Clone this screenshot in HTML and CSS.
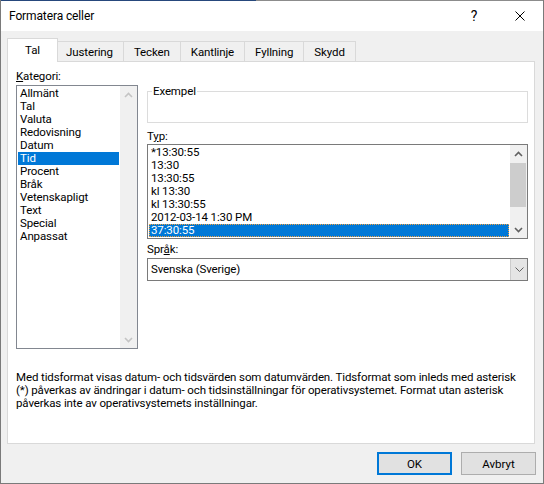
FILE: index.html
```html
<!DOCTYPE html>
<html lang="sv">
  <head>
    <meta charset="UTF-8" />
    <title>Formatera celler</title>
    <link rel="stylesheet" href="styles.css">
  </head>
  <body>
    <div class="window">
      <div class="titlebar">
        <span class="title">Formatera celler</span>
        <span class="title-btn help">?</span>
        <span class="title-btn close">
          <svg width="10" height="10" viewBox="0 0 10 10"><path d="M0.5 0.5 L9.5 9.5 M9.5 0.5 L0.5 9.5" stroke="#000" stroke-width="1" fill="none"/></svg>
        </span>
      </div>

      <div class="content">
        <div class="tabs">
          <div class="tab active">Tal</div>
          <div class="tab">Justering</div>
          <div class="tab">Tecken</div>
          <div class="tab">Kantlinje</div>
          <div class="tab">Fyllning</div>
          <div class="tab">Skydd</div>
        </div>

        <div class="panel">
          <div class="panel-main">
            <div class="col-cat">
              <label class="lbl"><u>K</u>ategori:</label>
              <div class="listbox cat-list">
                <ul class="items">
                  <li>Allmänt</li>
                  <li>Tal</li>
                  <li>Valuta</li>
                  <li>Redovisning</li>
                  <li>Datum</li>
                  <li class="sel">Tid</li>
                  <li>Procent</li>
                  <li>Bråk</li>
                  <li>Vetenskapligt</li>
                  <li>Text</li>
                  <li>Special</li>
                  <li>Anpassat</li>
                </ul>
                <div class="vscroll disabled">
                  <div class="sb-btn">
                    <svg width="9" height="6" viewBox="0 0 9 6"><path d="M1 5 L4.5 1.5 L8 5" fill="none" stroke="#c4c4c4" stroke-width="1.6"/></svg>
                  </div>
                  <div class="sb-track"></div>
                  <div class="sb-btn">
                    <svg width="9" height="6" viewBox="0 0 9 6"><path d="M1 1 L4.5 4.5 L8 1" fill="none" stroke="#c4c4c4" stroke-width="1.6"/></svg>
                  </div>
                </div>
              </div>
            </div>

            <div class="col-right">
              <fieldset class="sample">
                <legend>Exempel</legend>
              </fieldset>

              <label class="lbl lbl-typ">T<u>y</u>p:</label>
              <div class="listbox type-list">
                <ul class="items">
                  <li>*13:30:55</li>
                  <li>13:30</li>
                  <li>13:30:55</li>
                  <li>kl 13:30</li>
                  <li>kl 13:30:55</li>
                  <li>2012-03-14 1:30 PM</li>
                  <li class="sel focus">37:30:55</li>
                </ul>
                <div class="vscroll">
                  <div class="sb-btn">
                    <svg width="9" height="6" viewBox="0 0 9 6"><path d="M1 5 L4.5 1.5 L8 5" fill="none" stroke="#606060" stroke-width="1.6"/></svg>
                  </div>
                  <div class="sb-track">
                    <div class="sb-thumb"></div>
                  </div>
                  <div class="sb-btn">
                    <svg width="9" height="6" viewBox="0 0 9 6"><path d="M1 1 L4.5 4.5 L8 1" fill="none" stroke="#606060" stroke-width="1.6"/></svg>
                  </div>
                </div>
              </div>

              <label class="lbl lbl-lang">Spr<u>å</u>k:</label>
              <div class="combo">
                <span class="combo-text">Svenska (Sverige)</span>
                <span class="combo-btn">
                  <svg width="9" height="5" viewBox="0 0 9 5"><path d="M0.5 0.5 L4.5 4.5 L8.5 0.5" fill="none" stroke="#606060" stroke-width="1"/></svg>
                </span>
              </div>
            </div>
          </div>

          <p class="desc">
            Med tidsformat visas datum- och tidsvärden som datumvärden. Tidsformat som inleds med asterisk<br>
            (*) påverkas av ändringar i datum- och tidsinställningar för operativsystemet. Format utan asterisk<br>
            påverkas inte av operativsystemets inställningar.
          </p>
        </div>

        <div class="buttons">
          <button class="btn default">OK</button>
          <button class="btn">Avbryt</button>
        </div>
      </div>
    </div>
  </body>
</html>
```

FILE: styles.css
```css
* {
  margin: 0;
  padding: 0;
  box-sizing: border-box;
}

body {
  width: 544px;
  height: 484px;
  font-family: Roboto, "Liberation Sans", sans-serif;
  font-size: 11.5px;
  letter-spacing: -0.12px;
  color: #000000;
  background-color: #ffffff;
}

.window {
  width: 544px;
  height: 484px;
  display: flex;
  flex-direction: column;
  border: 1px solid #7a7a7a;
  border-top: 0;
  padding-top: 1px;
  background: linear-gradient(to right, #26487c 256px, #8c8c8c 256px) border-box 0 0 / 100% 1px no-repeat, #f0f0f0;
}

/* title bar */

.titlebar {
  height: 30px;
  display: flex;
  align-items: center;
  background-color: #ffffff;
}

.title {
  flex: 1;
  padding-left: 8px;
  font-size: 12px;
}

.title-btn {
  width: 46px;
  height: 30px;
  display: flex;
  align-items: center;
  justify-content: center;
}

.help {
  font-size: 14px;
}

/* tabs */

.content {
  flex: 1;
  padding: 7px 8px 0 6px;
}

.tabs {
  height: 23px;
  display: flex;
  align-items: flex-end;
  padding-left: 2px;
}

.tab {
  height: 20px;
  min-width: 51px;
  padding: 0 10px;
  margin-left: -1px;
  display: flex;
  align-items: center;
  justify-content: center;
  border: 1px solid #d9d9d9;
  border-bottom: 0;
  background-color: #f0f0f0;
}

.tab:first-child {
  margin-left: 0;
}

.tab.active {
  height: 24px;
  margin: 0 -2px -1px -2px;
  padding-bottom: 2px;
  background-color: #ffffff;
  position: relative;
  z-index: 1;
}

/* panel */

.panel {
  height: 383px;
  padding: 8px 5px 0 8px;
  border: 1px solid #d9d9d9;
  background-color: #ffffff;
}

.panel-main {
  display: grid;
  grid-template-columns: 122px 381px;
  column-gap: 9px;
}

.lbl {
  display: block;
  height: 13px;
  line-height: 13px;
}

.listbox {
  display: flex;
  border: 1px solid #828790;
  background-color: #ffffff;
}

.cat-list {
  height: 264px;
  margin-top: 2px;
}

.type-list {
  height: 95px;
  margin-top: 1px;
  border-color: #7a7a7a;
}

.items {
  flex: 1;
  list-style: none;
  padding: 1px;
}

.items li {
  height: 13px;
  line-height: 13px;
  padding-left: 2px;
  white-space: nowrap;
}

.items li.sel {
  background-color: #0078d7;
  color: #ffffff;
}

.items li.focus {
  line-height: 11px;
  padding-left: 1px;
  border: 1px dotted #f0a040;
}

.vscroll {
  width: 17px;
  display: flex;
  flex-direction: column;
  background-color: #f0f0f0;
}

.sb-btn {
  height: 17px;
  display: flex;
  align-items: center;
  justify-content: center;
}

.sb-track {
  flex: 1;
}

.sb-thumb {
  height: 44px;
  margin: 1px 1px 0 0;
  background-color: #cdcdcd;
}

/* right column */

.col-right {
  padding-top: 15px;
}

.sample {
  height: 38px;
  padding: 0 4px;
  border: 1px solid #dcdcdc;
  min-width: 0;
}

.sample legend {
  padding: 0 1px;
  line-height: 13px;
}

.lbl-typ {
  margin-top: 7px;
}

.lbl-lang {
  margin-top: 4px;
}

.combo {
  height: 23px;
  margin-top: 2px;
  display: flex;
  border: 1px solid #7a7a7a;
  background-color: #ffffff;
}

.combo-text {
  flex: 1;
  padding-left: 3px;
  line-height: 21px;
}

.combo-btn {
  width: 17px;
  display: flex;
  align-items: center;
  justify-content: center;
  border-left: 1px solid #cccccc;
  background-color: #e5e5e5;
}

.desc {
  margin-top: 22px;
  line-height: 13px;
  white-space: nowrap;
}

/* buttons */

.buttons {
  display: flex;
  justify-content: flex-end;
  gap: 9px;
  margin: 8px -1px 0 0;
}

.btn {
  width: 75px;
  height: 23px;
  font: inherit;
  color: #000000;
  background-color: #e1e1e1;
  border: 1px solid #adadad;
}

.btn.default {
  border: 2px solid #0078d7;
}
```
